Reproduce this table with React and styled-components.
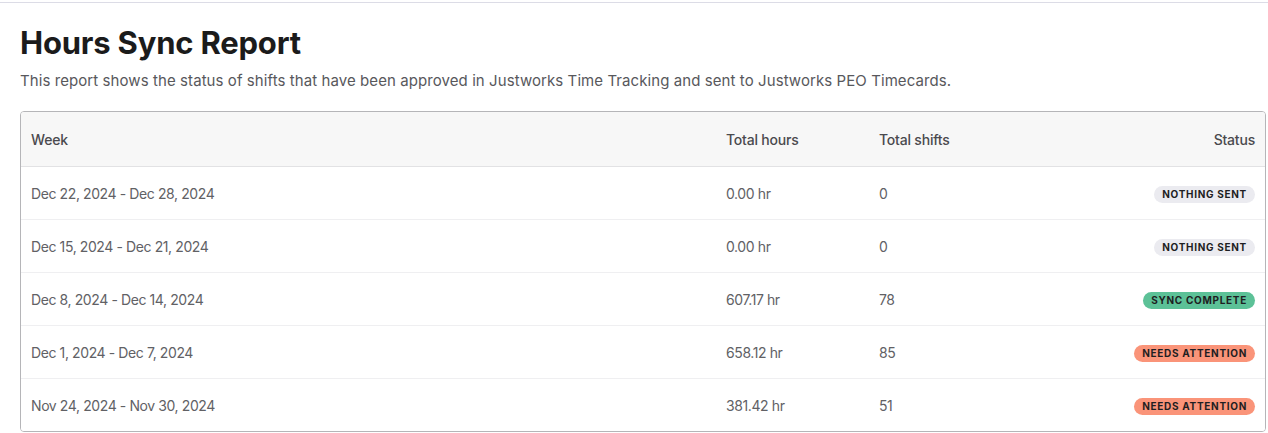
import styled, { createGlobalStyle } from "styled-components";

const GlobalStyle = createGlobalStyle`
  body {
    margin: 0;
    background: #ffffff;
    font-family: Inter, "Liberation Sans", sans-serif;
  }
`;

const Page = styled.div`
  margin-top: 2px;
  border-top: 1px solid #dcdce6;
  padding: 20px 2px 0 20px;
`;

const Title = styled.h1`
  margin: 0;
  font-size: 31px;
  font-weight: 700;
  line-height: 40px;
  color: #1b1b1b;
  letter-spacing: -0.2px;
`;

const Subtitle = styled.p`
  margin: 8px 0 20px;
  font-size: 15px;
  line-height: 20px;
  color: #58585c;
  letter-spacing: 0.08px;
`;

const Table = styled.div`
  border: 1px solid #b5b5b8;
  border-radius: 4px;
  overflow: hidden;
`;

const Row = styled.div`
  display: grid;
  grid-template-columns: 1fr 153px 153px 245px;
  align-items: center;
  height: ${(p) => (p.$head ? "54px" : "52px")};
  background: ${(p) => (p.$head ? "#f7f7f7" : "#ffffff")};
  border-top: ${(p) => (p.$first ? "none" : p.$afterHead ? "1px solid #e2e2e4" : "1px solid #efeff1")};
`;

const Cell = styled.div`
  padding: 0 10px;
  font-size: 14px;
  letter-spacing: ${(p) => (p.$head ? "-0.2px" : "-0.4px")};
  color: ${(p) => (p.$head ? "#4a4a4e" : "#616165")};
  font-weight: ${(p) => (p.$head ? 500 : 400)};
  text-align: ${(p) => (p.$right ? "right" : "left")};
  white-space: nowrap;

  &:nth-child(2),
  &:nth-child(3) {
    padding-left: 12px;
  }
`;

const badgeColors = {
  none: "#ebebf0",
  done: "#5cc197",
  attention: "#fa9479",
};

const Badge = styled.span`
  display: inline-block;
  height: 17px;
  line-height: 17px;
  padding: 0 8px;
  border-radius: 9px;
  background: ${(p) => badgeColors[p.$kind]};
  color: #1e1e22;
  font-size: 10px;
  font-weight: 700;
  letter-spacing: 0.7px;
  text-transform: uppercase;
`;

const rows = [
  { week: "Dec 22, 2024 - Dec 28, 2024", hours: "0.00 hr", shifts: "0", status: "Nothing sent", kind: "none" },
  { week: "Dec 15, 2024 - Dec 21, 2024", hours: "0.00 hr", shifts: "0", status: "Nothing sent", kind: "none" },
  { week: "Dec 8, 2024 - Dec 14, 2024", hours: "607.17 hr", shifts: "78", status: "Sync complete", kind: "done" },
  { week: "Dec 1, 2024 - Dec 7, 2024", hours: "658.12 hr", shifts: "85", status: "Needs attention", kind: "attention" },
  { week: "Nov 24, 2024 - Nov 30, 2024", hours: "381.42 hr", shifts: "51", status: "Needs attention", kind: "attention" },
];

export default function App() {
  return (
    <>
      <GlobalStyle />
      <Page>
        <Title>Hours Sync Report</Title>
        <Subtitle>
          This report shows the status of shifts that have been approved in Justworks Time Tracking and sent to Justworks PEO Timecards.
        </Subtitle>
        <Table>
          <Row $head $first>
            <Cell $head>Week</Cell>
            <Cell $head>Total hours</Cell>
            <Cell $head>Total shifts</Cell>
            <Cell $head $right>Status</Cell>
          </Row>
          {rows.map((r, i) => (
            <Row key={r.week} $afterHead={i === 0}>
              <Cell>{r.week}</Cell>
              <Cell>{r.hours}</Cell>
              <Cell>{r.shifts}</Cell>
              <Cell $right>
                <Badge $kind={r.kind}>{r.status}</Badge>
              </Cell>
            </Row>
          ))}
        </Table>
      </Page>
    </>
  );
}
